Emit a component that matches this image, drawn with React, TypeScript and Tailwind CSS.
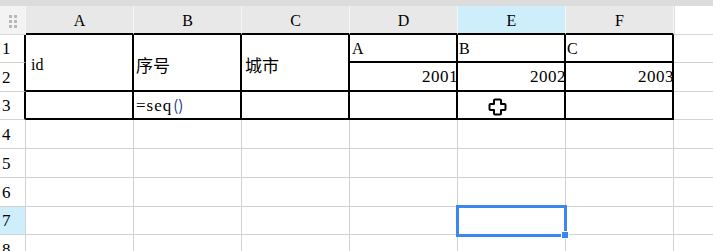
import React from "react";

const G = "border-r border-b border-[#d2d2d2]";
const HS = "border-r border-[#f6f6f6]";
const serif = "font-[family-name:'Liberation_Serif',serif]";
const cjk = "font-[family-name:'Noto_Sans_CJK_SC',sans-serif]";

function Head({ label, blue }: { label: string; blue?: boolean }) {
  return (
    <div
      className={`${HS} border-b-2 border-b-black flex items-center justify-center pt-[3px] text-[16px] text-black ${serif} ${
        blue ? "bg-[#cdeefa]" : "bg-[#e8e8e8]"
      }`}
    >
      {label}
    </div>
  );
}

function RowNum({ n, table, blue }: { n: number; table?: boolean; blue?: boolean }) {
  return (
    <div
      className={`border-b border-[#d2d2d2] ${
        table ? "border-r-2 border-r-black" : "border-r border-r-[#d2d2d2]"
      } flex items-center pl-[2px] pt-[1px] text-[17px] text-black ${serif} ${
        blue ? "bg-[#cdeefa]" : "bg-white"
      }`}
    >
      {n}
    </div>
  );
}

const T = "border-r-2 border-b-2 border-black";

export default function App() {
  const empties = (row: number) => (
    <>
      {[0, 1, 2, 3, 4, 5].map((i) =>
        row === 7 && i === 4 ? (
          <div key={i} className={`${G} relative`}>
            <div className="absolute left-[-2px] top-[-2px] w-[111px] h-[32px] border-[3px] border-[#3b86ef] z-10" />
            <div className="absolute left-[103px] top-[24px] w-[8px] h-[8px] bg-[#3b86ef] border border-white z-20" />
          </div>
        ) : (
          <div key={i} className={G} />
        )
      )}
      <div className="border-b border-[#d2d2d2]" />
    </>
  );

  return (
    <div className="w-[713px] h-[251px] overflow-hidden bg-white flex flex-col">
      <div className="h-[6px] shrink-0 bg-[#dcdcdc]" />
      <div className="grid grid-cols-[26px_repeat(6,108px)_1fr] grid-rows-[29px_28px_29px_28px_29px_29px_29px_28px_29px]">
        {/* header */}
        <div className={`${HS} border-b border-b-[#d8d8d8] bg-[#f3f3f3] flex items-center justify-center pt-[3px]`}>
          <div className="grid grid-cols-2 gap-x-[2px] gap-y-[2px]">
            {[0, 1, 2, 3, 4, 5].map((i) => (
              <div key={i} className="w-[3px] h-[3px] bg-[#b8b8b8]" />
            ))}
          </div>
        </div>
        <Head label="A" />
        <Head label="B" />
        <Head label="C" />
        <Head label="D" />
        <Head label="E" blue />
        <Head label="F" />
        <div className="bg-white border-b border-[#d8d8d8] border-l border-l-[#e0e0e0]" />

        {/* row 1 */}
        <RowNum n={1} table />
        <div className={`${T} row-span-2 flex items-center pl-[5px] pt-[5px] text-[16px] text-black ${serif}`}>id</div>
        <div className={`${T} row-span-2 flex items-center pl-[2px] pt-[4px] text-[17px] text-black ${cjk}`}>序号</div>
        <div className={`${T} row-span-2 flex items-center pl-[3px] pt-[4px] text-[17px] text-black ${cjk}`}>城市</div>
        <div className={`${T} flex items-center pl-[2px] pt-[1px] text-[16px] text-black ${serif}`}>A</div>
        <div className={`${T} flex items-center pl-[1px] pt-[1px] text-[16px] text-black ${serif}`}>B</div>
        <div className={`${T} flex items-center pl-[1px] pt-[1px] text-[16px] text-black ${serif}`}>C</div>
        <div className="border-b border-[#d2d2d2]" />

        {/* row 2 */}
        <RowNum n={2} table />
        <div className={`${T} flex items-center justify-end pt-[1px] text-[17px] text-black ${serif}`}>
          <span className="mr-[-2px] tracking-[0.5px]">2001</span>
        </div>
        <div className={`${T} flex items-center justify-end pt-[1px] text-[17px] text-black ${serif}`}>
          <span className="mr-[-2px] tracking-[0.5px]">2002</span>
        </div>
        <div className={`${T} flex items-center justify-end pt-[1px] text-[17px] text-black ${serif}`}>
          <span className="mr-[-2px] tracking-[0.5px]">2003</span>
        </div>
        <div className="border-b border-[#d2d2d2]" />

        {/* row 3 */}
        <RowNum n={3} table />
        <div className={T} />
        <div className={`${T} flex items-center pl-[2px] pt-[1px] text-black`}>
          <span className={`${serif} text-[17px] tracking-[1px]`}>=seq</span>
          <span className={`${cjk} text-[15px] text-[#1a3a8a] ml-[1px]`}>()</span>
        </div>
        <div className={T} />
        <div className={T} />
        <div className={`${T} relative`}>
          <svg
            className="absolute left-[30px] top-[6px]"
            width="19"
            height="18"
            viewBox="0 0 19 18"
          >
            <path
              d="M7 1.5 H12 Q13 1.5 13 2.5 V6 H16.5 Q17.5 6 17.5 7 V11 Q17.5 12 16.5 12 H13 V15.5 Q13 16.5 12 16.5 H7 Q6 16.5 6 15.5 V12 H2.5 Q1.5 12 1.5 11 V7 Q1.5 6 2.5 6 H6 V2.5 Q6 1.5 7 1.5 Z"
              fill="white"
              stroke="black"
              strokeWidth="2"
              strokeLinejoin="round"
            />
          </svg>
        </div>
        <div className={T} />
        <div className="border-b border-[#d2d2d2]" />

        {/* rows 4-8 */}
        <RowNum n={4} />
        {empties(4)}
        <RowNum n={5} />
        {empties(5)}
        <RowNum n={6} />
        {empties(6)}
        <RowNum n={7} blue />
        {empties(7)}
        <RowNum n={8} />
        {empties(8)}
      </div>
    </div>
  );
}
